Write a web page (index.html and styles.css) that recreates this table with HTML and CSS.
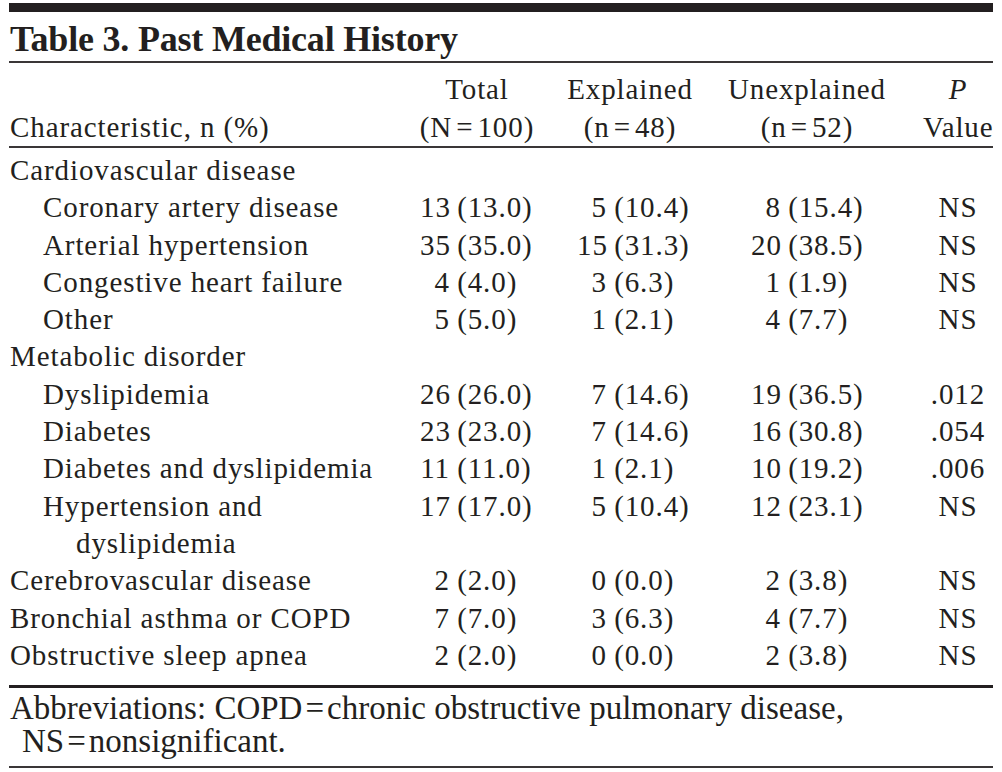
FILE: index.html
```html
<!DOCTYPE html>
<html lang="en">
<head>
<meta charset="utf-8">
<title>Table 3. Past Medical History</title>
<link rel="stylesheet" href="styles.css">
</head>
<body>
<div class="sheet">
  <div class="topbar"></div>
  <h1 class="title">Table 3. Past Medical History</h1>
  <table class="tbl">
    <colgroup>
      <col class="c-label">
      <col class="c-total">
      <col class="c-expl">
      <col class="c-unexpl">
      <col class="c-p">
    </colgroup>
    <thead>
      <tr>
        <th class="h-label"><br>Characteristic, n (%)</th>
        <th class="h-num">Total<br>(N<span class="eq">=</span>100)</th>
        <th class="h-num">Explained<br>(n<span class="eq">=</span>48)</th>
        <th class="h-num h-unexpl">Unexplained<br>(n<span class="eq">=</span>52)</th>
        <th class="h-num h-p"><i>P</i><br>Value</th>
      </tr>
    </thead>
    <tbody>
      <tr><td class="lvl0" colspan="5">Cardiovascular disease</td></tr>
      <tr><td class="lvl1">Coronary artery disease</td><td class="v tot"><span class="n">13</span> (13.0)</td><td class="v exp"><span class="n">5</span> (10.4)</td><td class="v une"><span class="n">8</span> (15.4)</td><td class="p">NS</td></tr>
      <tr><td class="lvl1">Arterial hypertension</td><td class="v tot"><span class="n">35</span> (35.0)</td><td class="v exp"><span class="n">15</span> (31.3)</td><td class="v une"><span class="n">20</span> (38.5)</td><td class="p">NS</td></tr>
      <tr><td class="lvl1">Congestive heart failure</td><td class="v tot"><span class="n">4</span> (4.0)</td><td class="v exp"><span class="n">3</span> (6.3)</td><td class="v une"><span class="n">1</span> (1.9)</td><td class="p">NS</td></tr>
      <tr><td class="lvl1">Other</td><td class="v tot"><span class="n">5</span> (5.0)</td><td class="v exp"><span class="n">1</span> (2.1)</td><td class="v une"><span class="n">4</span> (7.7)</td><td class="p">NS</td></tr>
      <tr><td class="lvl0" colspan="5">Metabolic disorder</td></tr>
      <tr><td class="lvl1">Dyslipidemia</td><td class="v tot"><span class="n">26</span> (26.0)</td><td class="v exp"><span class="n">7</span> (14.6)</td><td class="v une"><span class="n">19</span> (36.5)</td><td class="p">.012</td></tr>
      <tr><td class="lvl1">Diabetes</td><td class="v tot"><span class="n">23</span> (23.0)</td><td class="v exp"><span class="n">7</span> (14.6)</td><td class="v une"><span class="n">16</span> (30.8)</td><td class="p">.054</td></tr>
      <tr><td class="lvl1">Diabetes and dyslipidemia</td><td class="v tot"><span class="n">11</span> (11.0)</td><td class="v exp"><span class="n">1</span> (2.1)</td><td class="v une"><span class="n">10</span> (19.2)</td><td class="p">.006</td></tr>
      <tr><td class="lvl1 wrap">Hypertension and<br><span class="cont">dyslipidemia</span></td><td class="v tot"><span class="n">17</span> (17.0)</td><td class="v exp"><span class="n">5</span> (10.4)</td><td class="v une"><span class="n">12</span> (23.1)</td><td class="p">NS</td></tr>
      <tr><td class="lvl0">Cerebrovascular disease</td><td class="v tot"><span class="n">2</span> (2.0)</td><td class="v exp"><span class="n">0</span> (0.0)</td><td class="v une"><span class="n">2</span> (3.8)</td><td class="p">NS</td></tr>
      <tr><td class="lvl0">Bronchial asthma or COPD</td><td class="v tot"><span class="n">7</span> (7.0)</td><td class="v exp"><span class="n">3</span> (6.3)</td><td class="v une"><span class="n">4</span> (7.7)</td><td class="p">NS</td></tr>
      <tr><td class="lvl0">Obstructive sleep apnea</td><td class="v tot"><span class="n">2</span> (2.0)</td><td class="v exp"><span class="n">0</span> (0.0)</td><td class="v une"><span class="n">2</span> (3.8)</td><td class="p">NS</td></tr>
    </tbody>
  </table>
  <p class="foot">Abbreviations: COPD<span class="eq">=</span>chronic obstructive pulmonary disease,<br><span class="foot-cont">NS<span class="eq">=</span>nonsignificant.</span></p>
</div>
</body>
</html>
```

FILE: styles.css
```css
html, body {
  margin: 0;
  padding: 0;
  background: #ffffff;
}

body {
  font-family: "Liberation Serif", "Times New Roman", serif;
  color: #231f20;
}

.sheet {
  width: 984px;
  margin-left: 9px;
  padding-top: 3px;
}

.topbar {
  height: 9px;
  background: #231f20;
}

.title {
  margin: 0;
  padding: 7px 0 0 1px;
  height: 51px;
  box-sizing: border-box;
  font-size: 36px;
  line-height: 40px;
  font-weight: bold;
  letter-spacing: -0.2px;
  border-bottom: 2px solid #3a3637;
}

.tbl {
  width: 984px;
  table-layout: fixed;
  border-collapse: collapse;
  font-size: 29px;
  letter-spacing: 0.9px;
  line-height: 37.3px;
}

.c-label { width: 391px; }
.c-total { width: 154px; }
.c-expl { width: 152px; }
.c-unexpl { width: 217px; }
.c-p { width: 70px; }

.tbl th,
.tbl td {
  padding: 0;
  font-weight: normal;
  vertical-align: top;
  white-space: nowrap;
}

.tbl thead th {
  padding-top: 7px;
  border-bottom: 2px solid #3a3637;
  line-height: 38px;
}

.tbl th.h-label {
  text-align: left;
  padding-left: 1px;
}

.tbl th.h-num {
  text-align: center;
}

.tbl th.h-unexpl {
  padding-right: 15px;
}

.tbl th.h-p {
  padding-left: 0;
}

.eq {
  margin: 0 4px;
}

.tbl tbody tr:first-child td {
  padding-top: 4px;
}

.tbl tbody tr:last-child td {
  padding-bottom: 11px;
}

.tbl tbody {
  border-bottom: 3px solid #231f20;
}

.tbl td.lvl0 {
  padding-left: 1px;
}

.tbl td.lvl1 {
  padding-left: 34px;
}

.cont {
  display: inline-block;
  padding-left: 33px;
}

.tbl td.v {
  text-align: left;
}

.v .n {
  display: inline-block;
  width: 30px;
  text-align: right;
  margin-right: -1px;
}

.tbl td.tot { padding-left: 20px; }
.tbl td.exp { padding-left: 23px; }
.tbl td.une { padding-left: 45px; }

.tbl td.p {
  text-align: center;
}

.foot {
  margin: 0;
  padding: 4px 0 8px 1px;
  font-size: 33px;
  line-height: 33px;
  letter-spacing: 0;
  border-bottom: 2px solid #3a3637;
}

.foot .eq {
  margin: 0 3px;
}

.foot-cont {
  padding-left: 12px;
}
```
